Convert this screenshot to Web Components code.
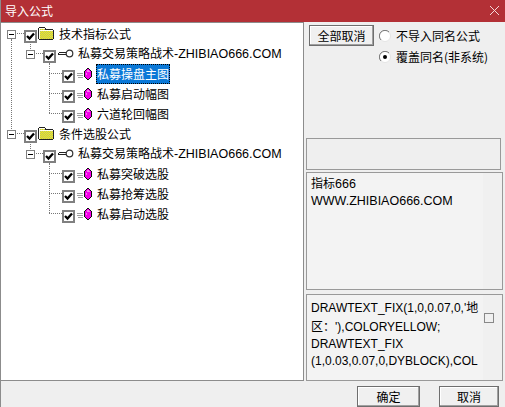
<!DOCTYPE html>
<html>
<head>
<meta charset="utf-8">
<style>
  html, body { margin: 0; padding: 0; background: #efefef; }
  body { font: 12px/17px "Noto Sans CJK SC", "Liberation Sans", sans-serif; color: #000; }
  .cjk { font: 12px/17px "Noto Sans CJK SC", sans-serif; }
</style>
</head>
<body>
<import-dialog>
  <span slot="title">导入公式</span>
  <tree-node slot="tree" level="0" kind="folder" checked line label="技术指标公式">
    <tree-node level="1" kind="key" checked label="私募交易策略战术-ZHIBIAO666.COM">
      <tree-node level="2" kind="formula" checked selected label="私募操盘主图"></tree-node>
      <tree-node level="2" kind="formula" checked label="私募启动幅图"></tree-node>
      <tree-node level="2" kind="formula" checked label="六道轮回幅图"></tree-node>
    </tree-node>
  </tree-node>
  <tree-node slot="tree" level="0" kind="folder" checked label="条件选股公式">
    <tree-node level="1" kind="key" checked label="私募交易策略战术-ZHIBIAO666.COM">
      <tree-node level="2" kind="formula" checked label="私募突破选股"></tree-node>
      <tree-node level="2" kind="formula" checked label="私募抢筹选股"></tree-node>
      <tree-node level="2" kind="formula" checked label="私募启动选股"></tree-node>
    </tree-node>
  </tree-node>
  <win-button slot="cancel-all" style="width:65px;height:21px">全部取消</win-button>
  <win-radio slot="radio">不导入同名公式</win-radio>
  <win-radio slot="radio" checked>覆盖同名(非系统)</win-radio>
  <memo-box slot="memo" style="height:118px" pad="1" size="12.5"><span class="cjk">指标</span>666<br>WWW.ZHIBIAO666.COM</memo-box>
  <memo-box slot="memo" style="height:87px" pad="3" size="12" boxed>DRAWTEXT_FIX(1,0,0.07,0,'<span class="cjk">地</span><br><span class="cjk">区：</span>'),COLORYELLOW;<br>DRAWTEXT_FIX<br>(1,0.03,0.07,0,DYBLOCK),COL</memo-box>
  <win-button slot="ok" style="width:63px;height:21px">确定</win-button>
  <win-button slot="cancel" style="width:60px;height:21px">取消</win-button>
</import-dialog>

<script>
const ICONS = {
  folder: `<svg width="16" height="13" viewBox="0 0 16 13" shape-rendering="crispEdges">
    <defs><pattern id="d" width="2" height="2" patternUnits="userSpaceOnUse">
      <rect width="2" height="2" fill="#ffff00"/><rect width="1" height="1" fill="#b0b080"/><rect x="1" y="1" width="1" height="1" fill="#b0b080"/>
    </pattern></defs>
    <path d="M0 12V1h1V0h6v1h1v1h7v1h1v9H15v1H1v-1z" fill="#222"/>
    <path d="M1 12V1h6v2h8v9z" fill="url(#d)"/>
    <path d="M1 1h6v1H1zM1 2h1v10H1zM1 3h14v1H1z" fill="#fffff0"/>
    </svg>`,
  key: `<svg width="16" height="9" viewBox="0 0 16 9">
    <path d="M0.5 3.5h8M0.5 5.5h8M0.5 3.5v2" stroke="#222" stroke-width="1" fill="none" shape-rendering="crispEdges"/>
    <circle cx="11.5" cy="4.5" r="3.3" fill="#fff" stroke="#333" stroke-width="1.2"/>
    </svg>`,
  formula: `<svg width="15" height="12" viewBox="0 0 15 12" shape-rendering="crispEdges">
    <path d="M0 5.5h6M0 7.5h6M1 9.5h5" stroke="#a0a0a0"/>
    <path d="M10 0h2v1h1v1h1v1h1v6h-1v1h-1v1h-1v1h-2v-1H9v-1H8V9H7V3h1V2h1V1h1z" fill="#111"/>
    <path d="M10 1h2v1h1v1h1v6h-1v1h-1v1h-2v-1H9V9H8V3h1V2h1z" fill="#f400e8"/>
    <path d="M10 2h2v1h1v1h-3zM9 5h1v2H9z" fill="#ff70f4"/>
    </svg>`
};

// latin runs of a label are set a little larger than the CJK ones
function markLatin(text) {
  return text.replace(/[A-Za-z0-9.\-]+/g, m => `<span class="lat">${m}</span>`);
}

class TreeNode extends HTMLElement {
  constructor() {
    super();
    const level = +this.getAttribute('level');
    const kind = this.getAttribute('kind');
    const root = this.attachShadow({mode: 'open'});
    const hasKids = level < 2;
    root.innerHTML = `
      <style>
        :host { display: block; position: relative; }
        .row { display: flex; align-items: center; height: 20px; position: relative; padding-left: ${6 + level * 19}px; }
        .exp { width: 7px; height: 7px; border: 1px solid #808080; background: #fff; position: relative; margin-right: 8px; flex: none; margin-top: 2px; }
        .exp::after { content: ""; position: absolute; left: 1px; right: 1px; top: 3px; height: 1px; background: #000; }
        .leaf { width: 17px; flex: none; }
        .chk { width: 9px; height: 9px; border: 2px solid #808080; background: #fff; flex: none; position: relative; margin-top: 6px; }
        .chk svg { position: absolute; left: 0; top: 0; }
        .icon { flex: none; margin-left: 2px; display: flex; position: relative; }
        .icon.folder { margin-left: 1px; }
        .icon.formula { margin-top: 2px; }
        .text { margin-left: ${kind === 'folder' ? 5 : kind === 'key' ? 4 : 5}px; white-space: pre; }
        .lat { font: 12.5px/17px "Liberation Sans", sans-serif; }
        .text.sel { background: #0a78d7; color: #fff; outline: 1px dotted #000; outline-offset: -1px; margin-left: 4px; padding: 1px 1px 2px; margin-top: 2px; line-height: 17px; }
        /* dotted connectors lie over the row */
        .h { position: absolute; top: 10px; height: 0; border-top: 1px dotted #777; }
        .v { position: absolute; width: 0; border-left: 1px dotted #777; }
      </style>
      <div class="row">
        ${level === 2 ? '<span class="h" style="left:48px;width:13px"></span>' : `<span class="h" style="left:${16 + level * 19}px;width:7px"></span>`}
        ${hasKids ? '<span class="exp"></span>' : '<span class="leaf"></span>'}
        <span class="chk"><svg width="9" height="9" viewBox="0 0 9 9"><path d="M1 4l2.5 2.5L8 1.5" fill="none" stroke="#000" stroke-width="2.3"/></svg></span>
        <span class="icon ${kind}">${ICONS[kind]}</span>
        <span class="text ${this.hasAttribute('selected') ? 'sel' : ''}">${markLatin(this.getAttribute('label'))}</span>
      </div>
      ${this.hasAttribute('line') ? '<span class="v" style="left:10px;top:16px;height:90px"></span>' : ''}
      ${level === 1 ? '<span class="v" style="left:48px;top:20px;height:50px"></span>' : ''}
      ${level === 1 ? '<span class="v" style="left:29px;top:0;height:7px;margin-top:-1px"></span>' : ''}
      <slot></slot>`;
  }
}

class WinButton extends HTMLElement {
  constructor() {
    super();
    this.attachShadow({mode: 'open'}).innerHTML = `
      <style>
        :host { display: flex; align-items: center; justify-content: center; box-sizing: border-box;
          border: 1px solid #6e6e6e; background: #f0f0f0; box-shadow: inset -1px -1px 0 #a0a0a0, inset 1px 1px 0 #fff; }
      </style><slot></slot>`;
  }
}

class WinRadio extends HTMLElement {
  constructor() {
    super();
    const on = this.hasAttribute('checked');
    this.attachShadow({mode: 'open'}).innerHTML = `
      <style>
        :host { display: flex; align-items: center; height: 21px; gap: 5px; white-space: pre; }
        svg { flex: none; }
      </style>
      <svg width="12" height="12" viewBox="0 0 12 12">
        <circle cx="6" cy="6" r="5.5" fill="#fff" stroke="#e4e4e4"/>
        <path d="M10 2A5.5 5.5 0 0 0 2 10" fill="none" stroke="#777" stroke-width="1"/>
        ${on ? '<circle cx="6" cy="6" r="2" fill="#000"/>' : ''}
      </svg><slot></slot>`;
  }
}

class MemoBox extends HTMLElement {
  constructor() {
    super();
    const boxed = this.hasAttribute('boxed');
    const pad = this.getAttribute('pad') || 3;
    const size = this.getAttribute('size') || 12;
    this.attachShadow({mode: 'open'}).innerHTML = `
      <style>
        :host { display: flex; box-sizing: border-box; border: 1px solid #999; background: #f0f0f0; }
        .txt { flex: none; width: 176px; box-sizing: border-box; padding: ${pad}px 0 0 4px; background: #f3f3f3;
          font: ${size}px/17px "Liberation Sans", sans-serif; overflow: hidden; white-space: nowrap; }
        .side { flex: 1; position: relative; }
        .box { position: absolute; left: 1px; top: 18px; width: 8px; height: 8px; border: 1px solid #888; background: #f0f0f0; }
      </style>
      <div class="txt"><slot></slot></div>
      <div class="side">${boxed ? '<span class="box"></span>' : ''}</div>`;
  }
}

class ImportDialog extends HTMLElement {
  constructor() {
    super();
    this.attachShadow({mode: 'open'}).innerHTML = `
      <style>
        :host { display: flex; flex-direction: column; width: 505px; height: 407px; box-sizing: border-box; overflow: hidden;
          background: #efefef; border-left: 1px solid #8c8c8c; }
        .title { height: 22px; flex: none; box-sizing: border-box; padding-bottom: 1px; background: #b33036; color: #fff; display: flex; align-items: center; justify-content: space-between; margin-left: -1px; padding-left: 5px; }
        .title svg { margin-right: 5px; }
        .main { flex: none; display: flex; height: 359px; }
        .tree { width: 303px; flex: none; box-sizing: border-box; background: #fff; border: 1px solid #8c8c8c; border-width: 1px 1px 1px 0; position: relative; }
        .side { flex: 1; display: flex; flex-direction: column; padding: 3px 2px 0 2px; min-width: 0; }
        .opts { display: flex; height: 113px; padding-left: 3px; gap: 5px; }
        .radios { display: flex; flex-direction: column; }
        .grey { height: 32px; flex: none; box-sizing: border-box; border: 1px solid #999; margin-right: 2px; background: #efefef; }
        .memos { display: flex; flex-direction: column; gap: 4px; margin-top: 2px; }
        .foot { flex: none; display: flex; justify-content: flex-end; gap: 19px; padding: 5px 6px 0 0; }
      </style>
      <div class="title"><slot name="title"></slot>
        <svg width="11" height="11" viewBox="0 0 11 11"><path d="M1 1l9 9M10 1l-9 9" stroke="#f4d8d8" fill="none"/></svg></div>
      <div class="main">
        <div class="tree"><slot name="tree"></slot></div>
        <div class="side">
          <div class="opts"><slot name="cancel-all"></slot><div class="radios"><slot name="radio"></slot></div></div>
          <div class="grey"></div>
          <div class="memos"><slot name="memo"></slot></div>
        </div>
      </div>
      <div class="foot"><slot name="ok"></slot><slot name="cancel"></slot></div>`;
  }
}

customElements.define('tree-node', TreeNode);
customElements.define('win-button', WinButton);
customElements.define('win-radio', WinRadio);
customElements.define('memo-box', MemoBox);
customElements.define('import-dialog', ImportDialog);
</script>
</body>
</html>
